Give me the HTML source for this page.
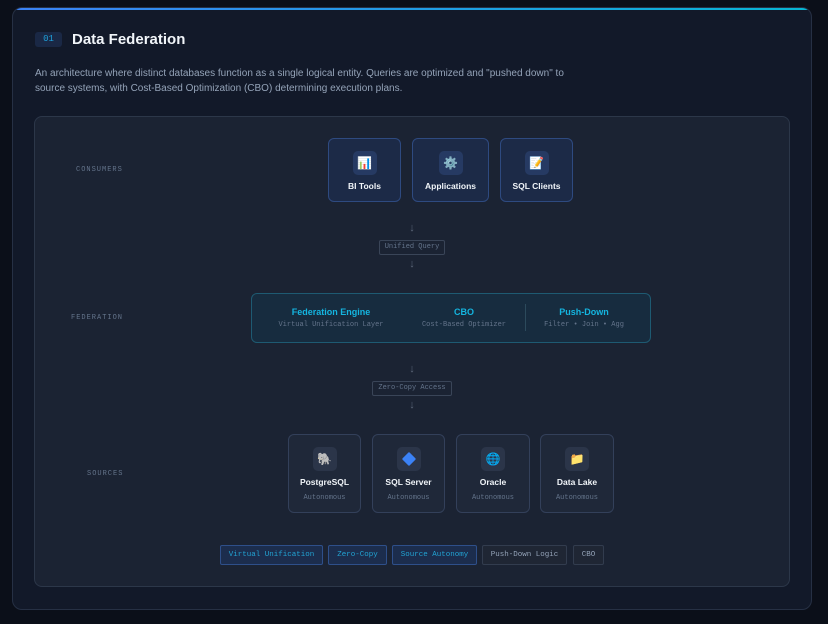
<!DOCTYPE html>
<html><head><meta charset="utf-8"><style>
*{margin:0;padding:0;box-sizing:border-box}
body{width:828px;height:624px;background:#0b0f19;font-family:"Liberation Sans",sans-serif;position:relative;overflow:hidden}
.card{position:absolute;left:12px;top:7px;width:800px;height:603px;background:#121929;border:1px solid #263044;border-radius:10px;overflow:hidden}
.card:before{content:"";position:absolute;left:0;right:0;top:0;height:2px;background:linear-gradient(90deg,#3b82f6,#06b6d4)}
.abs{position:absolute}
.mono{font-family:"Liberation Mono",monospace}
.num{left:22px;top:24px;width:27px;height:15px;background:#1a2845;border-radius:3px;color:#1e9fd8;font-size:9px;text-align:center;line-height:15px}
.title{left:59px;top:23px;color:#f1f5f9;font-size:15px;font-weight:bold}
.desc{left:22px;top:58px;color:#94a3b8;font-size:10px;line-height:15px;width:545px}
.panel{position:absolute;left:34px;top:116px;width:756px;height:471px;background:#1b2333;border:1px solid #2c3749;border-radius:8px}
.rl{position:absolute;color:#64748b;font-size:7px;letter-spacing:1px;font-family:"Liberation Mono",monospace}
.cb{position:absolute;top:138px;height:64px;background:#1c2a47;border:1px solid #2e4a80;border-radius:6px;text-align:center}
.ic{position:absolute;left:50%;margin-left:-12px;width:24px;height:24px;border-radius:5px;background:#263a63;font-size:12px;line-height:24px;text-align:center}
.lb{position:absolute;left:0;right:0;color:#f1f5f9;font-size:8.5px;font-weight:bold}
.arr{position:absolute;left:405px;width:14px;text-align:center;color:#5b6678;font-size:11px;font-weight:bold}
.pill{position:absolute;height:15px;border:1px solid #3a4558;border-radius:2px;color:#64748b;font-size:7px;line-height:13px;text-align:center;font-family:"Liberation Mono",monospace}
.fed{position:absolute;left:251px;top:293px;width:400px;height:50px;background:#172c3f;border:1px solid #1e5a72;border-radius:6px}
.ft{position:absolute;color:#14b5e0;font-size:9px;font-weight:bold;text-align:center}
.fs{position:absolute;color:#64748b;font-size:7px;text-align:center;font-family:"Liberation Mono",monospace}
.sb{position:absolute;top:434px;height:79px;background:#1f2839;border:1px solid #33405a;border-radius:6px;text-align:center}
.sb .ic{background:#2b3549;top:12px}
.sub{position:absolute;left:0;right:0;top:59px;color:#64748b;font-size:7px;font-family:"Liberation Mono",monospace}
.tag{position:absolute;top:545px;height:20px;border-radius:2px;font-size:7.5px;line-height:19px;text-align:center;font-family:"Liberation Mono",monospace}
.tb{background:#1c2d4d;border:1px solid #2e4f8a;color:#22a4d4}
.tg{background:#1f2634;border:1px solid #323c4e;color:#94a3b8}
</style></head><body>
<div class="card">
<div class="abs num mono">01</div>
<div class="abs title">Data Federation</div>
<div class="abs desc">An architecture where distinct databases function as a single logical entity. Queries are optimized and "pushed down" to<br>source systems, with Cost-Based Optimization (CBO) determining execution plans.</div>
</div>
<div class="panel"></div>
<div class="rl" style="left:76px;top:166px">CONSUMERS</div>
<div class="rl" style="left:71px;top:314px">FEDERATION</div>
<div class="rl" style="left:87px;top:470px">SOURCES</div>

<div class="cb" style="left:328px;width:73px"><div class="ic" style="top:12px">📊</div><div class="lb" style="top:42px">BI Tools</div></div>
<div class="cb" style="left:412px;width:77px"><div class="ic" style="top:12px">⚙️</div><div class="lb" style="top:42px">Applications</div></div>
<div class="cb" style="left:500px;width:73px"><div class="ic" style="top:12px">📝</div><div class="lb" style="top:42px">SQL Clients</div></div>

<div class="arr" style="top:222px">↓</div>
<div class="pill" style="left:379px;top:240px;width:66px">Unified Query</div>
<div class="arr" style="top:258px">↓</div>

<div class="fed"></div>
<div class="ft" style="left:251px;width:160px;top:307px">Federation Engine</div>
<div class="fs" style="left:251px;width:160px;top:321px">Virtual Unification Layer</div>
<div class="ft" style="left:400px;width:128px;top:307px">CBO</div>
<div class="fs" style="left:400px;width:128px;top:321px">Cost-Based Optimizer</div>
<div class="abs" style="left:525px;top:304px;width:1px;height:27px;background:#2c4a5c"></div>
<div class="ft" style="left:526px;width:116px;top:307px">Push-Down</div>
<div class="fs" style="left:526px;width:116px;top:321px">Filter • Join • Agg</div>

<div class="arr" style="top:363px">↓</div>
<div class="pill" style="left:372px;top:381px;width:80px">Zero-Copy Access</div>
<div class="arr" style="top:399px">↓</div>

<div class="sb" style="left:288px;width:73px"><div class="ic">🐘</div><div class="lb" style="top:42px">PostgreSQL</div><div class="sub">Autonomous</div></div>
<div class="sb" style="left:372px;width:73px"><div class="ic"><div style="position:absolute;left:7px;top:7px;width:10px;height:10px;background:#3b82f6;transform:rotate(45deg);border-radius:1px"></div></div><div class="lb" style="top:42px">SQL Server</div><div class="sub">Autonomous</div></div>
<div class="sb" style="left:456px;width:74px"><div class="ic">🌐</div><div class="lb" style="top:42px">Oracle</div><div class="sub">Autonomous</div></div>
<div class="sb" style="left:540px;width:74px"><div class="ic">📁</div><div class="lb" style="top:42px">Data Lake</div><div class="sub">Autonomous</div></div>

<div class="tag tb" style="left:220px;width:103px">Virtual Unification</div>
<div class="tag tb" style="left:328px;width:59px">Zero-Copy</div>
<div class="tag tb" style="left:392px;width:85px">Source Autonomy</div>
<div class="tag tg" style="left:482px;width:85px">Push-Down Logic</div>
<div class="tag tg" style="left:573px;width:31px">CBO</div>
</body></html>
